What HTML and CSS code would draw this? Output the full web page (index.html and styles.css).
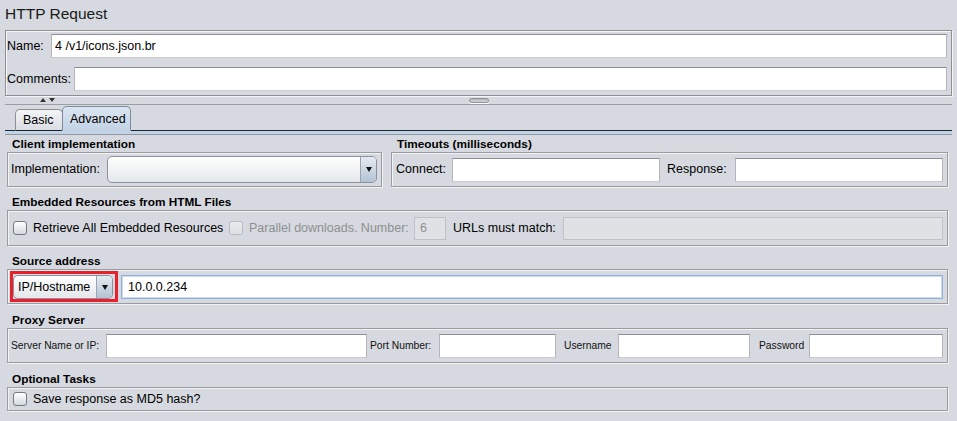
FILE: index.html
```html
<!DOCTYPE html>
<html>
<head>
<meta charset="utf-8">
<title>HTTP Request</title>
<link rel="stylesheet" href="styles.css">
</head>
<body>
<div class="app">
  <div class="title">HTTP Request</div>
  <div class="namebox">
    <div class="nrow">
      <span class="lbl lbl-name">Name:</span>
      <div class="input">4 /v1/icons.json.br</div>
    </div>
    <div class="nrow nrow2">
      <span class="lbl lbl-comments">Comments:</span>
      <div class="input"></div>
    </div>
  </div>
  <div class="splitter">
    <div class="arrows"><span class="up"></span><span class="down"></span></div>
    <div class="grip"></div>
    <div></div>
  </div>
  <div class="tabs">
    <div class="tab">Basic</div>
    <div class="tab active">Advanced</div>
  </div>
  <div class="tabline"></div>

  <div class="content">
    <div class="row1">
      <div class="section">
        <div class="stitle">Client implementation</div>
        <div class="box box-client">
          <span class="lbl lbl-impl">Implementation:</span>
          <div class="combo combo-impl">
            <div class="ctext"></div>
            <div class="cbtn"><span class="tri"></span></div>
          </div>
        </div>
      </div>
      <div class="section">
        <div class="stitle stitle-t">Timeouts (milliseconds)</div>
        <div class="box box-timeouts">
          <span class="lbl lbl-connect">Connect:</span>
          <div class="input grow"></div>
          <span class="lbl lbl-response">Response:</span>
          <div class="input grow"></div>
        </div>
      </div>
    </div>

    <div class="section">
      <div class="stitle">Embedded Resources from HTML Files</div>
      <div class="box box-embed">
        <span class="check"></span>
        <span class="lbl cb-retrieve">Retrieve All Embedded Resources</span>
        <span class="check disabled"></span>
        <span class="lbl dis cb-parallel">Parallel downloads. Number:</span>
        <div class="input disabled in-num">6</div>
        <span class="lbl lbl-urls">URLs must match:</span>
        <div class="input disabled grow"></div>
      </div>
    </div>

    <div class="section">
      <div class="stitle">Source address</div>
      <div class="box box-source">
        <div class="highlight">
          <div class="combo combo-ip">
            <div class="ctext">IP/Hostname</div>
            <div class="cbtn"><span class="tri"></span></div>
          </div>
        </div>
        <div class="input focused grow">10.0.0.234</div>
      </div>
    </div>

    <div class="section sec-proxy">
      <div class="stitle">Proxy Server</div>
      <div class="box box-proxy">
        <span class="plbl pl-server">Server Name or IP:</span>
        <div class="input in-server"></div>
        <span class="plbl pl-port">Port Number:</span>
        <div class="input in-port"></div>
        <span class="plbl pl-user">Username</span>
        <div class="input in-user"></div>
        <span class="plbl pl-pass">Password</span>
        <div class="input grow"></div>
      </div>
    </div>

    <div class="section sec-opt">
      <div class="stitle">Optional Tasks</div>
      <div class="box box-opt">
        <span class="check"></span>
        <span class="lbl cb-md5">Save response as MD5 hash?</span>
      </div>
    </div>
  </div>
</div>
</body>
</html>
```

FILE: styles.css
```css
* { box-sizing: border-box; }

html, body {
  margin: 0;
  padding: 0;
}

body {
  width: 957px;
  height: 421px;
  overflow: hidden;
  background: #d6d9df;
  font-family: "Liberation Sans", Arial, sans-serif;
  font-size: 12.5px;
  color: #000;
}

.title {
  padding: 5px 0 0 5px;
  height: 23px;
  line-height: 18px;
  font-size: 15.5px;
  color: #1a1a1a;
  margin-bottom: 7px;
}

.namebox {
  margin: 0 5px;
  border: 1px solid #8e8f91;
  box-shadow: inset 1px 1px 0 #f4f5f7, 1px 1px 0 #f4f5f7;
  padding: 3px 4px 4px 1px;
}

.nrow {
  display: flex;
  align-items: center;
  height: 24px;
}

.nrow2 { margin-top: 9px; }

.lbl {
  flex: none;
  white-space: nowrap;
  line-height: 15px;
}

.lbl-name { width: 44px; }
.lbl-comments { width: 67px; }

.input {
  flex: none;
  height: 24px;
  background: #fff;
  border: 1px solid;
  border-color: #8e8f91 #b4b6b9 #c9cbce #b4b6b9;
  padding: 0 3px;
  line-height: 22px;
  white-space: nowrap;
  overflow: hidden;
}

.nrow .input { flex: 1; }

.grow { flex: 1 1 0; }

/* splitter */
.splitter {
  margin: 0 5px;
  height: 9px;
  border-bottom: 1px solid #9a9ea6;
  display: grid;
  grid-template-columns: 1fr auto 1fr;
  align-items: start;
}

.arrows {
  display: flex;
  padding: 2px 0 0 35px;
  gap: 3px;
}

.arrows .up {
  width: 0; height: 0;
  border-left: 3px solid transparent;
  border-right: 3px solid transparent;
  border-bottom: 4px solid #333;
}

.arrows .down {
  width: 0; height: 0;
  border-left: 3px solid transparent;
  border-right: 3px solid transparent;
  border-top: 4px solid #333;
}

.grip {
  width: 20px;
  height: 5px;
  margin-top: 2px;
  border: 1px solid #8c919a;
  border-radius: 3px;
  background: linear-gradient(#aeb3bb, #d2d5db);
  box-shadow: 0 1px 0 #fff;
}

/* tabs */
.tabs {
  margin: 0 5px;
  height: 26px;
  padding-left: 10px;
  display: flex;
  align-items: flex-end;
  border-bottom: 1px solid #1c2530;
}

.tab {
  height: 22px;
  margin-bottom: -1px;
  border: 1px solid #8e8f91;
  border-bottom: 1px solid #1c2530;
  border-radius: 5px 5px 0 0;
  background: linear-gradient(#f4f5f7, #d9dce1);
  padding: 3px 0 0 7px;
  line-height: 15px;
  width: 48px;
}

.tab.active {
  height: 25px;
  width: 69px;
  margin-left: -1px;
  border-color: #7d8b9b;
  border-bottom-color: #c3d3e6;
  background: linear-gradient(#dbe5f0, #c3d3e6);
  padding-top: 5px;
}

.tabline {
  margin: 0 5px;
  height: 4px;
  background: #c3d3e6;
  border-bottom: 1px solid #8e98a4;
}

/* content */
.content {
  margin: 0 9px 0 7px;
  padding-top: 2px;
  display: flex;
  flex-direction: column;
  gap: 8px;
}

.row1 {
  display: grid;
  grid-template-columns: 375px 1fr;
  column-gap: 9px;
}

.stitle {
  font-weight: bold;
  font-size: 11.8px;
  line-height: 15px;
  height: 15px;
  padding-left: 5px;
  white-space: nowrap;
}

.stitle-t { padding-left: 6px; }

.box {
  display: flex;
  align-items: center;
  height: 35px;
  border: 1px solid #9a9ca0;
  box-shadow: inset 1px 1px 0 #f1f2f4, 1px 1px 0 #f1f2f4;
  padding: 0 4px 0 3px;
}

.box-client { padding: 0 4px 0 3px; }
.lbl-impl { width: 96px; }

.box-timeouts { padding-left: 4px; }
.lbl-connect { width: 56px; }
.lbl-response { width: 68px; margin-left: 7px; }

.box-embed { height: 36px; padding-left: 5px; }
.box-embed .input { height: 23px; line-height: 21px; }

.check {
  flex: none;
  width: 14px;
  height: 14px;
  border: 1px solid #727983;
  border-radius: 3px;
  background: linear-gradient(#ffffff, #d4d8de);
  margin-right: 6px;
}

.check.disabled {
  border-color: #b9bdc3;
  background: linear-gradient(#e9ebee, #dcdfe3);
}

.cb-retrieve { width: 190px; margin-right: 6px; }
.dis { color: #8e8f91; }
.cb-parallel { width: 165px; }

.input.disabled {
  background: #dfe1e5;
  border-color: #bec1c6;
  color: #8e8f91;
}

.in-num { width: 32px; padding-left: 5px; }
.lbl-urls { width: 110px; margin-left: 7px; }

/* combo */
.combo {
  flex: none;
  display: flex;
  height: 27px;
  border: 1px solid #8a929d;
  border-radius: 5px;
  background: linear-gradient(#fefefe, #e4e7eb);
  overflow: hidden;
}

.combo-impl { width: 270px; }

.ctext {
  flex: 1;
  padding-left: 4px;
  line-height: 22px;
  white-space: nowrap;
}

.cbtn {
  flex: none;
  width: 16px;
  border-left: 1px solid #98a4b2;
  background: linear-gradient(#e4eaf0, #b3c3d3);
  display: flex;
  align-items: center;
  justify-content: center;
}

.tri {
  width: 0; height: 0;
  border-left: 3.5px solid transparent;
  border-right: 3.5px solid transparent;
  border-top: 5px solid #111;
}

.box-source { padding-left: 2px; }

.highlight {
  flex: none;
  border: 3px solid #e8202b;
  padding: 1px 2px 0 0;
  margin-right: 3px;
}

.combo-ip {
  width: 100px;
  height: 24px;
}

.combo-ip .ctext { line-height: 22px; }

.input.focused {
  border: 1px solid #8fb1d8;
  box-shadow: inset 0 0 0 1px #cddcee;
  padding-left: 6px;
}

/* proxy */
.sec-proxy { margin-top: 1px; }
.sec-opt { margin-top: 1px; }

.box-proxy { padding-left: 3px; }
.box-proxy .input { height: 24px; }

.plbl {
  flex: none;
  font-size: 10.3px;
  white-space: nowrap;
  color: #111;
}

.pl-server { width: 95px; }
.pl-port { width: 69px; }
.pl-user { width: 54px; }
.pl-pass { width: 50px; }

.in-server { width: 261px; margin-right: 3px; }
.in-port { width: 117px; margin-right: 8px; }
.in-user { width: 132px; margin-right: 9px; }

.box-opt { height: 24px; padding-left: 5px; }
```
